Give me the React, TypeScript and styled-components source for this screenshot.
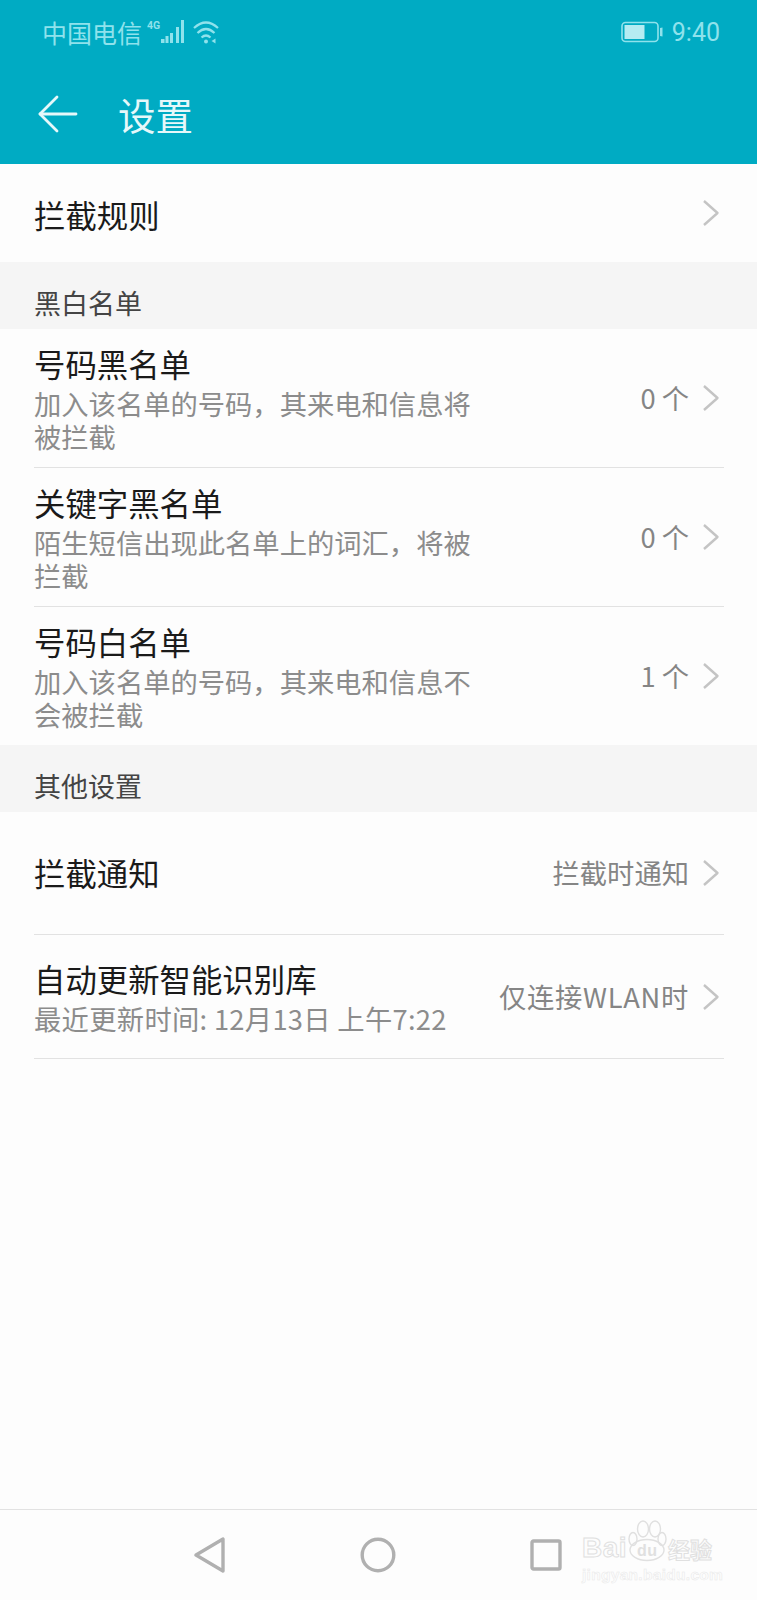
import styled, { createGlobalStyle } from "styled-components";

const GlobalStyle = createGlobalStyle`
  html, body {
    margin: 0;
    padding: 0;
    background: #fdfdfd;
  }
  * {
    box-sizing: border-box;
  }
`;

const Screen = styled.div`
  position: relative;
  width: 757px;
  height: 1600px;
  display: flex;
  flex-direction: column;
  overflow: hidden;
  background: #fdfdfd;
  font-family: "Noto Sans CJK SC", "Noto Sans", sans-serif;
`;

const Header = styled.header`
  height: 164px;
  flex: none;
  background: #00abc3;
  display: flex;
  flex-direction: column;
`;

const StatusBar = styled.div`
  height: 64px;
  padding: 0 37px 0 42px;
  display: flex;
  align-items: center;
  color: #8fe2ec;
`;

const Carrier = styled.span`
  font-size: 25px;
  line-height: 1;
`;

const SignalGroup = styled.span`
  display: flex;
  align-items: center;
  gap: 9px;
  margin-left: 5px;
  flex: 1;
`;

const Clock = styled.span`
  font-family: "Roboto", sans-serif;
  font-size: 25px;
  line-height: 30px;
  margin: 2px 0 0 9px;
`;

const TitleBar = styled.div`
  flex: 1;
  display: flex;
  align-items: center;
  padding: 0 0 0 38px;
  color: #e6f8fa;
`;

const Title = styled.h1`
  margin: 0 0 0 40px;
  font-size: 37.5px;
  font-weight: 400;
  line-height: 1;
`;

const Row = styled.div<{ $height: number; $divider?: boolean }>`
  height: ${(p) => p.$height}px;
  flex: none;
  margin: 0 33px 0 34px;
  padding-right: 4px;
  display: flex;
  align-items: center;
  border-bottom: ${(p) => (p.$divider ? "1.5px solid #e2e2e2" : "none")};
`;

const RowText = styled.div<{ $lower?: boolean }>`
  flex: 1;
  min-width: 0;
  padding-top: ${(p) => (p.$lower ? 4 : 0)}px;
`;

const RowTitle = styled.div`
  font-size: 31.4px;
  line-height: 34px;
  color: #1a1a1a;
`;

const RowSub = styled.div<{ $loose?: boolean }>`
  margin-top: 6px;
  font-size: 27.3px;
  line-height: 33px;
  color: #8c8c8c;
  max-width: 445px;
  letter-spacing: ${(p) => (p.$loose ? 0.3 : 0)}px;
`;

const RowValue = styled.span<{ $loose?: boolean }>`
  font-size: 27.3px;
  line-height: 1;
  color: #858585;
  margin-right: 13px;
  white-space: nowrap;
  letter-spacing: ${(p) => (p.$loose ? 0.7 : 0)}px;
`;

const SectionHeader = styled.div`
  height: 67px;
  flex: none;
  background: #f5f5f5;
  padding: 22px 34px 0;
  font-size: 27px;
  line-height: 38px;
  color: #444444;
`;

const NavBar = styled.nav`
  position: absolute;
  left: 0;
  right: 0;
  bottom: 0;
  height: 91px;
  border-top: 1.5px solid #e2e2e2;
  display: flex;
  align-items: center;
  padding: 0 195px 0 194px;
  justify-content: space-between;
`;

const Watermark = styled.div`
  position: absolute;
  left: 582px;
  bottom: 16px;
  width: 136px;
  color: #fdfdfd;
  -webkit-text-stroke: 1px #e0e0e0;
  font-family: "Liberation Sans", sans-serif;
  font-weight: 700;
`;

const MarkTop = styled.div`
  height: 44px;
  display: flex;
  align-items: flex-end;
  font-size: 28px;
  line-height: 28px;
  letter-spacing: 0.5px;
`;

const MarkCn = styled.span`
  font-family: "Noto Sans CJK SC", sans-serif;
  font-size: 22px;
  line-height: 28px;
  letter-spacing: 0;
  margin-left: 1px;
`;

const MarkUrl = styled.div`
  font-size: 15.5px;
  line-height: 18px;
  margin-top: 4px;
  letter-spacing: 0.3px;
  -webkit-text-stroke: 0.5px #e8e8e8;
`;

function Chevron() {
  return (
    <svg width="18" height="28" viewBox="0 0 18 28" fill="none">
      <path d="M2 2 L15.5 14 L2 26" stroke="#c4c4c4" strokeWidth="2.4" strokeLinejoin="round" />
    </svg>
  );
}

function SignalIcon() {
  return (
    <svg width="37" height="28" viewBox="0 0 37 28" fill="currentColor">
      <text x="0" y="11" fontFamily="Roboto, sans-serif" fontSize="10.5" fontWeight="700">4G</text>
      <rect x="14" y="21" width="3.5" height="4" />
      <rect x="18.5" y="18" width="3" height="7" />
      <rect x="23" y="15" width="3" height="10" />
      <rect x="29" y="9" width="3" height="16" />
      <rect x="34" y="2" width="3" height="23" />
    </svg>
  );
}

function WifiIcon() {
  return (
    <svg width="26" height="24" viewBox="0 0 26 24" fill="none" stroke="currentColor" strokeWidth="2.2">
      <path d="M1 8 Q13 -3 25 8" />
      <path d="M4.5 13 Q13 5 21.5 13" />
      <path d="M8.5 17.5 Q13 13.5 17.5 17.5" />
      <circle cx="13" cy="21.5" r="2" fill="currentColor" stroke="none" />
      <path d="M18.5 21 L22.5 18.5 L22.5 23.5 Z" fill="currentColor" stroke="none" />
    </svg>
  );
}

function BatteryIcon() {
  return (
    <svg width="42" height="22" viewBox="0 0 42 22" fill="none">
      <rect x="1" y="1.5" width="36" height="19" rx="3.5" stroke="#8fe2ec" strokeWidth="1.6" />
      <rect x="3.5" y="4" width="20" height="14" fill="#b5ecf2" />
      <path d="M39 7 L41.5 6.5 V15.5 L39 15 Z" fill="#8fe2ec" />
    </svg>
  );
}

function BackArrow() {
  return (
    <svg width="40" height="38" viewBox="0 0 40 38" fill="none" stroke="#e6f8fa" strokeWidth="2.8" strokeLinecap="round" strokeLinejoin="round">
      <path d="M19 2 L2 19 L19 36" />
      <path d="M2 19 H38" />
    </svg>
  );
}

function PawLogo() {
  return (
    <svg width="40" height="42" viewBox="0 0 40 42" fill="none" stroke="#e0e0e0" strokeWidth="1.4">
      <ellipse cx="16" cy="9" rx="5.5" ry="8" />
      <ellipse cx="28" cy="9" rx="5.5" ry="8" />
      <ellipse cx="6" cy="19" rx="4" ry="6.5" />
      <ellipse cx="35" cy="19" rx="4" ry="6.5" />
      <ellipse cx="20" cy="30" rx="17" ry="10.5" />
      <text x="10" y="36" fontFamily="Liberation Sans, sans-serif" fontSize="16" fontWeight="700" fill="#e0e0e0" stroke="none">du</text>
    </svg>
  );
}

export default function App() {
  return (
    <Screen>
      <GlobalStyle />
      <Header>
        <StatusBar>
          <Carrier>中国电信</Carrier>
          <SignalGroup>
            <SignalIcon />
            <WifiIcon />
          </SignalGroup>
          <BatteryIcon />
          <Clock>9:40</Clock>
        </StatusBar>
        <TitleBar>
          <BackArrow />
          <Title>设置</Title>
        </TitleBar>
      </Header>

      <Row $height={98}>
        <RowText $lower>
          <RowTitle>拦截规则</RowTitle>
        </RowText>
        <Chevron />
      </Row>

      <SectionHeader>黑白名单</SectionHeader>
      <Row $height={139} $divider>
        <RowText $lower>
          <RowTitle>号码黑名单</RowTitle>
          <RowSub>加入该名单的号码，其来电和信息将被拦截</RowSub>
        </RowText>
        <RowValue>0 个</RowValue>
        <Chevron />
      </Row>
      <Row $height={139} $divider>
        <RowText $lower>
          <RowTitle>关键字黑名单</RowTitle>
          <RowSub>陌生短信出现此名单上的词汇，将被拦截</RowSub>
        </RowText>
        <RowValue>0 个</RowValue>
        <Chevron />
      </Row>
      <Row $height={138}>
        <RowText $lower>
          <RowTitle>号码白名单</RowTitle>
          <RowSub>加入该名单的号码，其来电和信息不会被拦截</RowSub>
        </RowText>
        <RowValue>1 个</RowValue>
        <Chevron />
      </Row>

      <SectionHeader>其他设置</SectionHeader>
      <Row $height={123} $divider>
        <RowText>
          <RowTitle>拦截通知</RowTitle>
        </RowText>
        <RowValue>拦截时通知</RowValue>
        <Chevron />
      </Row>
      <Row $height={124} $divider>
        <RowText $lower>
          <RowTitle>自动更新智能识别库</RowTitle>
          <RowSub $loose>最近更新时间: 12月13日 上午7:22</RowSub>
        </RowText>
        <RowValue $loose>仅连接WLAN时</RowValue>
        <Chevron />
      </Row>

      <NavBar>
        <svg width="32" height="36" viewBox="0 0 32 36" fill="none" stroke="#b0b0b0" strokeWidth="3.4" strokeLinejoin="round">
          <path d="M29 2 V34 L2 18 Z" />
        </svg>
        <svg width="36" height="36" viewBox="0 0 36 36" fill="none" stroke="#b0b0b0" strokeWidth="3.4">
          <circle cx="18" cy="18" r="15.8" />
        </svg>
        <svg width="32" height="32" viewBox="0 0 32 32" fill="none" stroke="#b0b0b0" strokeWidth="3.4" strokeLinejoin="round">
          <rect x="2" y="2" width="28" height="28" rx="1.5" />
        </svg>
      </NavBar>

      <Watermark>
        <MarkTop>
          Bai
          <PawLogo />
          <MarkCn>经验</MarkCn>
        </MarkTop>
        <MarkUrl>jingyan.baidu.com</MarkUrl>
      </Watermark>
    </Screen>
  );
}
